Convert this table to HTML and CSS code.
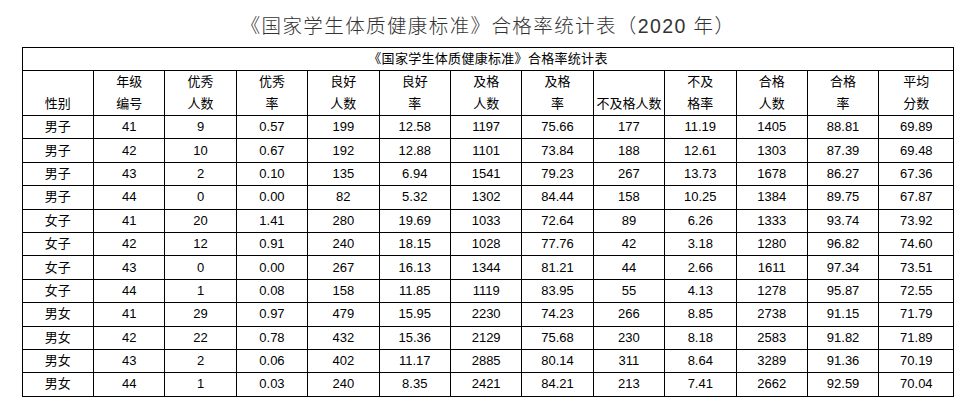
FILE: index.html
```html
<!DOCTYPE html>
<html lang="zh-CN">
<head>
<meta charset="utf-8">
<title>《国家学生体质健康标准》合格率统计表（2020 年）</title>
<link rel="stylesheet" href="styles.css">
</head>
<body>
<div class="page">
  <h1 class="title">《国家学生体质健康标准》合格率统计表（2020 年）</h1>
  <table class="stats">
    <colgroup>
      <col class="c"><col class="c"><col class="c"><col class="c"><col class="c"><col class="c"><col class="c">
      <col class="c"><col class="c"><col class="c"><col class="c"><col class="c"><col class="c-last">
    </colgroup>
    <thead>
      <tr class="cap-row"><th colspan="13" class="cap">《国家学生体质健康标准》合格率统计表</th></tr>
      <tr class="head-row">
        <th>性别</th>
        <th>年级<br>编号</th>
        <th>优秀<br>人数</th>
        <th>优秀<br>率</th>
        <th>良好<br>人数</th>
        <th>良好<br>率</th>
        <th>及格<br>人数</th>
        <th>及格<br>率</th>
        <th>不及格人数</th>
        <th>不及<br>格率</th>
        <th>合格<br>人数</th>
        <th>合格<br>率</th>
        <th>平均<br>分数</th>
      </tr>
    </thead>
    <tbody>
      <tr><td>男子</td><td>41</td><td>9</td><td>0.57</td><td>199</td><td>12.58</td><td>1197</td><td>75.66</td><td>177</td><td>11.19</td><td>1405</td><td>88.81</td><td>69.89</td></tr>
      <tr><td>男子</td><td>42</td><td>10</td><td>0.67</td><td>192</td><td>12.88</td><td>1101</td><td>73.84</td><td>188</td><td>12.61</td><td>1303</td><td>87.39</td><td>69.48</td></tr>
      <tr><td>男子</td><td>43</td><td>2</td><td>0.10</td><td>135</td><td>6.94</td><td>1541</td><td>79.23</td><td>267</td><td>13.73</td><td>1678</td><td>86.27</td><td>67.36</td></tr>
      <tr><td>男子</td><td>44</td><td>0</td><td>0.00</td><td>82</td><td>5.32</td><td>1302</td><td>84.44</td><td>158</td><td>10.25</td><td>1384</td><td>89.75</td><td>67.87</td></tr>
      <tr><td>女子</td><td>41</td><td>20</td><td>1.41</td><td>280</td><td>19.69</td><td>1033</td><td>72.64</td><td>89</td><td>6.26</td><td>1333</td><td>93.74</td><td>73.92</td></tr>
      <tr><td>女子</td><td>42</td><td>12</td><td>0.91</td><td>240</td><td>18.15</td><td>1028</td><td>77.76</td><td>42</td><td>3.18</td><td>1280</td><td>96.82</td><td>74.60</td></tr>
      <tr><td>女子</td><td>43</td><td>0</td><td>0.00</td><td>267</td><td>16.13</td><td>1344</td><td>81.21</td><td>44</td><td>2.66</td><td>1611</td><td>97.34</td><td>73.51</td></tr>
      <tr><td>女子</td><td>44</td><td>1</td><td>0.08</td><td>158</td><td>11.85</td><td>1119</td><td>83.95</td><td>55</td><td>4.13</td><td>1278</td><td>95.87</td><td>72.55</td></tr>
      <tr><td>男女</td><td>41</td><td>29</td><td>0.97</td><td>479</td><td>15.95</td><td>2230</td><td>74.23</td><td>266</td><td>8.85</td><td>2738</td><td>91.15</td><td>71.79</td></tr>
      <tr><td>男女</td><td>42</td><td>22</td><td>0.78</td><td>432</td><td>15.36</td><td>2129</td><td>75.68</td><td>230</td><td>8.18</td><td>2583</td><td>91.82</td><td>71.89</td></tr>
      <tr><td>男女</td><td>43</td><td>2</td><td>0.06</td><td>402</td><td>11.17</td><td>2885</td><td>80.14</td><td>311</td><td>8.64</td><td>3289</td><td>91.36</td><td>70.19</td></tr>
      <tr><td>男女</td><td>44</td><td>1</td><td>0.03</td><td>240</td><td>8.35</td><td>2421</td><td>84.21</td><td>213</td><td>7.41</td><td>2662</td><td>92.59</td><td>70.04</td></tr>
    </tbody>
  </table>
</div>
</body>
</html>
```

FILE: styles.css
```css
html, body {
  margin: 0;
  padding: 0;
  background: #ffffff;
}

.page {
  width: 976px;
  font-family: "Liberation Sans", "Noto Sans CJK SC", sans-serif;
  color: #000;
}

.title {
  margin: 0;
  padding-top: 11px;
  font-size: 19.5px;
  line-height: 30px;
  font-weight: 300;
  letter-spacing: 1.4px;
  text-align: center;
  color: #333333;
  font-family: "Liberation Sans", "Noto Sans CJK SC", sans-serif;
}

.stats {
  margin: 6px auto 0;
  width: 932px;
  table-layout: fixed;
  border-collapse: collapse;
  font-size: 13px;
}

.stats col.c {
  width: 71.4px;
}

.stats col.c-last {
  width: 75px;
}

.stats th,
.stats td {
  border: 1px solid #000;
  padding: 0;
  text-align: center;
  font-weight: normal;
}

.stats .cap-row th {
  height: 22px;
  line-height: 22px;
  vertical-align: middle;
  letter-spacing: 0.3px;
}

.stats .head-row th {
  height: 44px;
  line-height: 22px;
  vertical-align: bottom;
}

.stats td {
  height: 22.4px;
  line-height: 20px;
  vertical-align: middle;
}
```
